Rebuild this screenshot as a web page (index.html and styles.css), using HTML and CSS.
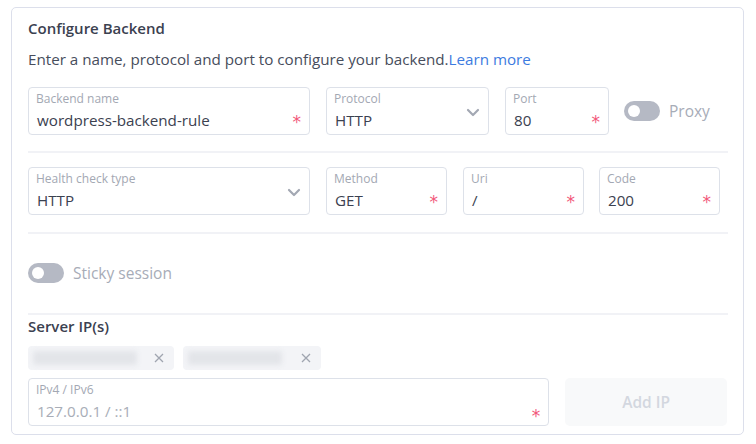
FILE: index.html
```html
<!DOCTYPE html>
<html>
<head>
<meta charset="utf-8">
<link rel="stylesheet" href="styles.css">
</head>
<body>
<div class="card">
  <h2 class="title">Configure Backend</h2>
  <p class="desc">Enter a name, protocol and port to configure your backend.<a class="link">Learn more</a></p>

  <div class="row row1">
    <div class="field w-name">
      <div class="fbody"><span class="flabel">Backend name</span><span class="fval">wordpress-backend-rule</span></div>
      <span class="req">*</span>
    </div>
    <div class="field w-proto">
      <div class="fbody"><span class="flabel">Protocol</span><span class="fval">HTTP</span></div>
      <svg class="chev" width="14" height="9" viewBox="0 0 14 9"><path d="M2 2l5 5 5-5" fill="none" stroke="#a3a8b3" stroke-width="2.2" stroke-linecap="round" stroke-linejoin="round"/></svg>
    </div>
    <div class="field w-port">
      <div class="fbody"><span class="flabel">Port</span><span class="fval">80</span></div>
      <span class="req">*</span>
    </div>
    <div class="toggle-wrap">
      <span class="toggle"><span class="knob"></span></span>
      <span class="tlabel">Proxy</span>
    </div>
  </div>

  <div class="divider d1"></div>

  <div class="row row2">
    <div class="field w-name">
      <div class="fbody"><span class="flabel">Health check type</span><span class="fval">HTTP</span></div>
      <svg class="chev" width="14" height="9" viewBox="0 0 14 9"><path d="M2 2l5 5 5-5" fill="none" stroke="#a3a8b3" stroke-width="2.2" stroke-linecap="round" stroke-linejoin="round"/></svg>
    </div>
    <div class="field w-method">
      <div class="fbody"><span class="flabel">Method</span><span class="fval">GET</span></div>
      <span class="req">*</span>
    </div>
    <div class="field w-uri">
      <div class="fbody"><span class="flabel">Uri</span><span class="fval">/</span></div>
      <span class="req">*</span>
    </div>
    <div class="field w-code">
      <div class="fbody"><span class="flabel">Code</span><span class="fval">200</span></div>
      <span class="req">*</span>
    </div>
  </div>

  <div class="divider d2"></div>

  <div class="toggle-wrap sticky">
    <span class="toggle"><span class="knob"></span></span>
    <span class="tlabel">Sticky session</span>
  </div>

  <div class="divider d3"></div>

  <h3 class="subtitle">Server IP(s)</h3>

  <div class="chips">
    <div class="chip c1"><span class="blur b1"></span><svg class="x" width="10" height="10" viewBox="0 0 10 10"><path d="M1 1l8 8M9 1l-8 8" stroke="#a0a5b0" stroke-width="1.3"/></svg></div>
    <div class="chip c2"><span class="blur b2"></span><svg class="x" width="10" height="10" viewBox="0 0 10 10"><path d="M1 1l8 8M9 1l-8 8" stroke="#a0a5b0" stroke-width="1.3"/></svg></div>
  </div>

  <div class="row row3">
    <div class="field w-ip">
      <div class="fbody"><span class="flabel">IPv4 / IPv6</span><span class="fval ph">127.0.0.1 / ::1</span></div>
      <span class="req req-low">*</span>
    </div>
    <button class="btn">Add IP</button>
  </div>
</div>
</body>
</html>
```

FILE: styles.css
```css
* { box-sizing: border-box; }
html, body { margin: 0; padding: 0; background: #fff; }
body {
  font-family: "Open Sans", "Noto Sans", sans-serif;
  color: #3b4150;
  width: 756px;
  height: 444px;
  overflow: hidden;
}
.card {
  margin: 7px 0 0 11px;
  width: 733px;
  height: 428px;
  border: 1px solid #dcdfeb;
  border-radius: 5px;
  padding: 0 16px 0 16px;
}
.title {
  margin: 9px 0 0 0;
  font-size: 15px;
  font-weight: 600;
  line-height: 22px;
  color: #3b4150;
}
.desc {
  margin: 9px 0 0 0;
  font-size: 15.2px;
  line-height: 22px;
  color: #474d5c;
}
.link { color: #3d7be0; text-decoration: none; }

.row { display: flex; align-items: center; }
.row1 { margin-top: 17px; }
.field {
  height: 48px;
  border: 1px solid #dde1e9;
  border-radius: 4px;
  display: flex;
  align-items: flex-start;
  padding: 3px 8px 0 7px;
}
.fbody { flex: 1; display: flex; flex-direction: column; min-width: 0; }
.flabel {
  font-size: 12px;
  line-height: 16px;
  color: #a3a8b3;
}
.fval {
  font-size: 15.2px;
  line-height: 22px;
  color: #3b4150;
  margin-top: 2px;
  margin-left: 1px;
}
.fval.ph { color: #a8adb7; }
.req {
  color: #f2587a;
  font-size: 17px;
  line-height: 17px;
  margin-top: 23px;
  font-family: "DejaVu Sans", sans-serif;
}
.req-low { margin-top: 26px; }
.chev { margin-top: 17px; margin-right: 0; }

.w-name { width: 282px; margin-right: 16px; }
.w-proto { width: 163px; margin-right: 16px; }
.w-port { width: 104px; margin-right: 15px; }
.w-method { width: 121px; margin-right: 16px; }
.w-uri { width: 121px; margin-right: 15px; }
.w-code { width: 121px; }
.w-ip { width: 522px; margin-right: 16px; }

.toggle-wrap { display: flex; align-items: center; }
.toggle {
  width: 36px;
  height: 20px;
  border-radius: 10px;
  background: #b5b9c4;
  display: flex;
  align-items: center;
  padding-left: 4px;
}
.knob { width: 12px; height: 12px; border-radius: 50%; background: #fff; }
.tlabel {
  margin-left: 9px;
  font-size: 15.5px;
  color: #a7acb7;
  line-height: 22px;
}
.row1 .toggle-wrap { margin-top: -1px; }

.divider { height: 2px; background: #f1f2f6; width: 700px; }
.d1 { margin: 16px 0 14px 0; }
.d2 { margin: 17px 0 0 0; }
.sticky { margin-top: 28px; }
.d3 { margin: 29px 0 0 0; }

.subtitle {
  margin: 0;
  font-size: 15px;
  font-weight: 600;
  line-height: 22px;
  color: #3b4150;
}
.chips { display: flex; gap: 9px; margin-top: 9px; }
.chip {
  height: 24px;
  background: #f3f4f7;
  border-radius: 4px;
  display: flex;
  align-items: center;
  padding: 0 10px 0 5px;
}
.c1 { width: 146px; }
.c2 { width: 138px; }
.blur {
  height: 14px;
  background: #e3e5e9;
  filter: blur(2.5px);
  border-radius: 3px;
}
.b1 { width: 104px; }
.b2 { width: 94px; }
.x { margin-left: auto; }
.row3 { margin-top: 8px; }
.btn {
  width: 162px;
  height: 48px;
  border: none;
  border-radius: 5px;
  background: #f8f9fa;
  color: #d3d7df;
  font-family: "Open Sans", "Noto Sans", sans-serif;
  font-size: 15.5px;
  font-weight: 600;
}
```
